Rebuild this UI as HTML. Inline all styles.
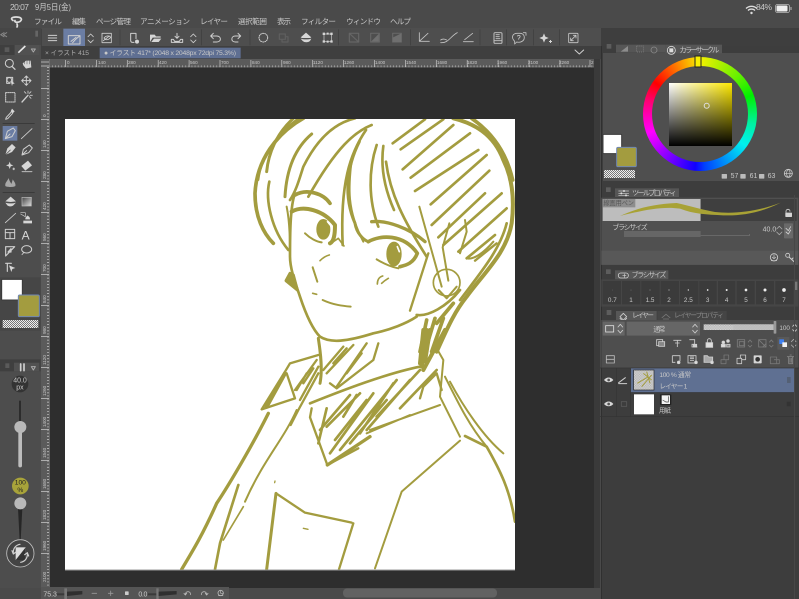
<!DOCTYPE html>
<html lang="ja"><head><meta charset="utf-8"><title>Clip Studio</title>
<style>
html,body{margin:0;padding:0;background:#4a4a4a;width:799px;height:599px;overflow:hidden}
#s{position:absolute;left:0;top:0;filter:blur(.35px)}
text{font-family:"Liberation Sans","Noto Sans CJK JP",sans-serif;fill:#c8c8c8}
.i{fill:none;stroke-linecap:round;stroke-linejoin:round}
.i:not([stroke]){stroke:#cfcfcf}
.i:not([stroke-width]){stroke-width:3.5}
.d{fill:none;stroke-linejoin:round}
.d:not([stroke]){stroke:#6c6c6c}
.d:not([stroke-width]){stroke-width:3.5}
.w{fill:#d6d6d6;stroke:none}
#wheel{position:absolute;left:643px;top:57px;width:114px;height:114px;border-radius:50%;background:conic-gradient(#f4f000,#66f000 45deg,#00f000 70deg,#00f0a0 100deg,#00f0f0 125deg,#0040ff 175deg,#1000ff 185deg,#a000ff 225deg,#ff00ff 250deg,#ff0070 285deg,#ff0000 305deg,#ff8000 335deg,#f4f000)}
#hole{position:absolute;left:9px;top:9px;width:96px;height:96px;border-radius:50%;background:#4f4f4f}
#sq{position:absolute;left:669px;top:83px;width:63px;height:63px;background:linear-gradient(to top,#000,rgba(0,0,0,0)),linear-gradient(to right,#fff,#fde800)}
</style></head><body>
<svg id="s" width="799" height="599" viewBox="0 0 799 599" xmlns="http://www.w3.org/2000/svg">
<defs>
<pattern id="ck" width="6" height="6" patternUnits="userSpaceOnUse"><rect width="6" height="6" fill="#eee"/><rect width="3" height="3" fill="#777"/><rect x="3" y="3" width="3" height="3" fill="#777"/></pattern>
<pattern id="ck2" width="5" height="5" patternUnits="userSpaceOnUse"><rect width="5" height="5" fill="#ddd"/><rect width="2.5" height="2.5" fill="#aaa"/><rect x="2.5" y="2.5" width="2.5" height="2.5" fill="#aaa"/></pattern>
<clipPath id="cv"><rect x="65" y="119" width="450" height="451"/></clipPath>
<linearGradient id="gr" x1="0" x2="1" y1="0" y2="1"><stop offset="0" stop-color="#444"/><stop offset="1" stop-color="#ddd"/></linearGradient>
</defs>
<rect width="799" height="599" fill="#4a4a4a"/>
<!-- workspace -->
<rect x="49" y="59" width="551" height="529" fill="#2e2e2e"/>
<rect x="594" y="59" width="6" height="529" fill="#3a3a3a"/>
<rect x="0" y="28" width="41" height="560" fill="#4d4d4d"/>
<rect x="41" y="46" width="560" height="13" fill="#3f3f3f"/>
<rect x="41" y="28" width="560" height="18" fill="#4e4e4e"/>
<rect x="41" y="59" width="553" height="8" fill="#5b5b5b"/>
<rect x="41" y="59" width="8" height="529" fill="#5b5b5b"/>
<rect x="0" y="28" width="41" height="17" fill="#464646"/>
<!-- canvas -->
<rect x="65" y="119" width="450" height="451" fill="#fff"/>
<g clip-path="url(#cv)">
<g transform="translate(240,110) scale(.33333)" fill="none" stroke="#a39c3f" stroke-width="9" stroke-linecap="round" stroke-linejoin="round">
<path d="M190 25C110 70 50 150 45 250C45 320 70 370 100 400" stroke-width="11"/>
<path d="M175 25C120 65 65 130 55 210" stroke-width="6"/>
<path d="M160 25C110 70 85 130 80 185"/>
<path d="M215 72C170 110 140 170 135 260"/>
<path d="M88 215C75 270 95 360 145 420" stroke-width="8"/>
<path d="M140 290C150 340 150 400 150 440" stroke-width="6"/>
<path d="M165 250C150 290 150 380 150 440C150 480 170 530 180 560C200 620 220 660 240 680C270 700 320 695 400 670C450 660 500 640 530 620" stroke-width="8"/>
<path d="M150 490L138 512L172 540L160 495Z" fill="#a39c3f"/>
<path d="M345 25C280 40 230 90 190 170C180 200 170 240 150 270" stroke-width="8"/>
<path d="M395 45C345 65 290 110 205 260" stroke-width="8"/>
<path d="M378 60C330 130 300 220 308 405" stroke-width="8"/>
<path d="M358 95C320 170 310 260 345 340C350 370 370 390 385 395" stroke-width="9"/>
<path d="M335 150C325 230 320 300 370 395" stroke-width="6"/>
<path d="M410 105C385 180 385 270 415 350" stroke-width="8"/>
<path d="M430 108C420 180 440 250 462 300" stroke-width="8"/>
<path d="M438 155C450 250 490 330 560 440" stroke-width="8"/>
<path d="M165 255C200 235 250 250 270 280" stroke-width="11"/>
<path d="M155 305C190 285 250 300 285 345C285 380 280 395 270 400" stroke-width="12"/>
<ellipse cx="250" cy="358" rx="18" ry="28" fill="#a39c3f" stroke-width="6"/>
<path d="M262 335L270 345" stroke="#fff" stroke-width="4"/>
<path d="M195 370C210 385 230 395 245 397" stroke-width="6"/>
<path d="M280 395L295 385L312 408" stroke-width="5"/>
<path d="M395 335C440 330 510 355 555 395" stroke-width="10"/>
<path d="M385 395C420 375 490 370 532 430C520 460 500 465 480 470" stroke-width="11"/>
<ellipse cx="462" cy="432" rx="20" ry="34" fill="#a39c3f" stroke-width="6"/>
<path d="M472 410L478 425" stroke="#fff" stroke-width="5"/>
<path d="M410 448C430 460 450 470 475 475" stroke-width="6"/>
<path d="M240 452C250 442 260 437 268 435" stroke-width="5"/>
<path d="M218 472L232 515" stroke-width="6"/>
<path d="M248 570C280 585 310 588 332 590" stroke-width="6"/>
<path d="M218 550L230 553" stroke-width="5"/>
<path d="M412 522C412 507 420 500 428 498M425 520C430 515 440 508 445 505" stroke-width="5"/>
<path d="M538 290L605 530" stroke-width="6"/>
<circle cx="620" cy="518" r="40" stroke-width="5"/>
<path d="M628 340L608 412L625 512" stroke-width="6"/>
<path d="M675 330L680 365L660 430" stroke-width="6"/>
<path d="M565 430L510 602" stroke-width="7"/>
<path d="M530 615C565 620 620 590 660 540" stroke-width="8"/>
<path d="M596 540L620 565L650 530" stroke-width="6"/>
<path d="M458 100L555 28" stroke-width="8"/>
<path d="M482 118L610 28" stroke-width="8"/>
<path d="M488 178L640 45" stroke-width="8"/>
<path d="M512 203L690 70" stroke-width="8"/>
<path d="M525 243L715 120" stroke-width="8"/>
<path d="M572 283L740 135" stroke-width="8"/>
<path d="M575 345L748 182" stroke-width="8"/>
<path d="M595 382L735 250" stroke-width="8"/>
<path d="M610 405L785 250" stroke-width="8"/>
<path d="M655 425L800 295" stroke-width="8"/>
<path d="M680 445L765 375" stroke-width="8"/>
<path d="M705 452L770 400" stroke-width="7"/>
<path d="M640 25C700 40 760 70 790 150C815 200 825 260 815 340C800 430 730 490 680 560C640 610 620 660 590 725" stroke-width="12"/>
<path d="M695 25C760 70 800 130 818 210" stroke-width="11"/>
<path d="M800 340C780 420 720 490 660 570" stroke-width="8"/>
<path d="M680 445C700 450 730 430 760 395" stroke-width="6"/>
<path d="M560 630L540 725M585 625L555 725M610 625L575 725M640 580L590 640" stroke-width="11"/>
</g>
<g transform="translate(170,330) scale(.33333)" fill="none" stroke="#a39c3f" stroke-width="8" stroke-linecap="round" stroke-linejoin="round">
<path d="M445 25C452 70 458 120 450 160" stroke-width="9"/>
<path d="M460 120L520 50M470 130L550 45M500 170L590 40M480 160L500 175L610 90L625 40M490 100L530 55M530 130L575 70" stroke-width="7"/>
<path d="M760 0L750 100M780 0L765 95M825 0L760 120M770 0L755 110" stroke-width="12"/>
<path d="M445 75L360 100L345 125L275 238L345 215L375 205L350 130" stroke-width="7"/>
<path d="M345 130L290 230" stroke-width="12"/>
<path d="M375 180L440 90M390 210L445 110M410 130L380 180M445 130L385 240L362 285M400 160L430 115" stroke-width="7"/>
<path d="M420 220C520 180 650 130 750 110" stroke-width="8"/>
<path d="M425 235L420 262L472 405L565 355" stroke-width="7"/>
<path d="M472 405L600 320" stroke-width="10"/>
<path d="M590 310L720 255M600 300L810 225" stroke-width="6"/>
<path d="M445 340L470 235M480 370L610 190M450 300L540 195M470 290L570 190M510 360L640 200M570 310L670 160M620 260L750 120M690 235L800 120M640 200L680 150M520 260L560 195M590 300L720 150M495 330L590 210M540 340L650 210" stroke-width="8"/>
<path d="M750 205L760 170L800 130L815 180" stroke-width="7"/>
<path d="M800 55L820 90L810 200L870 320" stroke-width="6"/>
<path d="M840 155C880 230 940 320 1000 370M825 140C870 230 900 290 950 350" stroke-width="6"/>
<path d="M885 318L950 350C990 420 1020 480 1035 575" stroke-width="8"/>
<path d="M870 332L695 485L615 715" stroke-width="6"/>
<path d="M295 250C250 340 180 460 140 520C100 610 70 660 35 718" stroke-width="10"/>
<path d="M380 240C340 330 280 390 225 515" stroke-width="6"/>
<path d="M205 465L150 640L135 718" stroke-width="8"/>
<path d="M220 530L160 630" stroke-width="5"/>
<path d="M318 490L290 718" stroke-width="9"/>
<path d="M318 490L405 548L545 578" stroke-width="7"/>
<path d="M550 580L507 718" stroke-width="7"/>
<path d="M400 595L414 598M315 453L314 458" stroke-width="4"/>
</g>
</g>
<rect x="65" y="569.5" width="450" height="1" fill="#999"/>

<!-- rulers -->
<g stroke="#c8c8c8" stroke-width=".7" fill="none">
<path d="M49 66.5H594" stroke-dasharray=".7 2.4" stroke-width="2"/>
<path d="M49 67H594" stroke="#7a7a7a"/>
<path d="M49.5 59V587" stroke="#7a7a7a"/>
<path d="M48 67V587" stroke-dasharray=".7 2.4" stroke-width="2"/>
<path d="M65.5 60V67M96.4 60V67M127.3 60V67M158.2 60V67M189.1 60V67M220 60V67M250.9 60V67M281.8 60V67M312.7 60V67M343.6 60V67M374.5 60V67M405.4 60V67M436.3 60V67M467.2 60V67M498.1 60V67M529 60V67M559.9 60V67M590 60V67"/>
<path d="M41 88.5H49M41 119.5H49M41 150.5H49M41 181.5H49M41 212.5H49M41 243.5H49M41 274.5H49M41 305.5H49M41 336.5H49M41 367.5H49M41 398.5H49M41 429.5H49M41 460.5H49M41 491.5H49M41 522.5H49M41 553.5H49" />
<path d="M41 62H49M41 66H49"/>
</g>
<g font-size="4.6">
<text x="67" y="64">0</text><text x="98" y="64">140</text><text x="128" y="64">280</text><text x="159" y="64">420</text><text x="190" y="64">560</text><text x="221" y="64">700</text><text x="252" y="64">840</text><text x="283" y="64">980</text><text x="313" y="64">1120</text><text x="344" y="64">1260</text><text x="375" y="64">1400</text><text x="406" y="64">1540</text><text x="437" y="64">1680</text><text x="467" y="64">1820</text><text x="497" y="64">1960</text><text x="528" y="64">2100</text><text x="559" y="64">2260</text><text x="591" y="64">2</text>
<text transform="translate(46,117) rotate(-90)">0</text><text transform="translate(46,148) rotate(-90)">140</text><text transform="translate(46,179) rotate(-90)">280</text><text transform="translate(46,210) rotate(-90)">420</text><text transform="translate(46,241) rotate(-90)">560</text><text transform="translate(46,272) rotate(-90)">700</text><text transform="translate(46,303) rotate(-90)">840</text><text transform="translate(46,334) rotate(-90)">980</text><text transform="translate(46,365) rotate(-90)">1120</text><text transform="translate(46,396) rotate(-90)">1260</text><text transform="translate(46,427) rotate(-90)">1400</text><text transform="translate(46,458) rotate(-90)">1540</text><text transform="translate(46,489) rotate(-90)">1680</text><text transform="translate(46,520) rotate(-90)">1820</text><text transform="translate(46,551) rotate(-90)">1960</text><text transform="translate(46,582) rotate(-90)">2100</text>
</g>

<!-- status & menu -->
<g font-size="8.5"><text x="10" y="10" font-size="8.5" textLength="19">20:07</text><text x="35" y="10" textLength="36" lengthAdjust="spacingAndGlyphs">9月5日(金)</text>
<text x="756" y="10" textLength="16">84%</text></g>
<g font-size="7.6">
<text x="34" y="24" textLength="28">ファイル</text><text x="72" y="24" textLength="14">編集</text><text x="96" y="24" textLength="35">ページ管理</text><text x="140" y="24" textLength="50">アニメーション</text><text x="200" y="24" textLength="28">レイヤー</text><text x="238" y="24" textLength="29">選択範囲</text><text x="277" y="24" textLength="14">表示</text><text x="301" y="24" textLength="35">フィルター</text><text x="346" y="24" textLength="35">ウィンドウ</text><text x="390" y="24" textLength="21">ヘルプ</text>
</g>
<!-- wifi & battery -->
<path d="M746 8.5a8 8 0 0 1 11 0M748 10.5a5 5 0 0 1 7 0" stroke="#ddd" stroke-width="1.3" fill="none"/><circle cx="751.5" cy="13" r="1.2" fill="#ddd"/>
<rect x="775.5" y="4.5" width="14" height="8" rx="2" fill="none" stroke="#bbb" stroke-width=".8"/><rect x="776.5" y="5.5" width="11" height="6" rx="1" fill="#eee"/><rect x="790.5" y="7" width="1" height="3" fill="#bbb"/>
<!-- logo -->
<path d="M13 20.5C10 18.500 12 17 16 17C21 17 23 19 20 21.500C17 23 14 22 15 20.500M17 24C17.500 25 17.500 26 17 27" stroke="#ddd" stroke-width="1.700" fill="none" stroke-linecap="round"/>

<!-- toolbar (zoom coords) -->
<g transform="scale(.33333)">
<rect x="190" y="86" width="65" height="52" fill="#6b7da3"/>
<path d="M125 86V138M360 88V136M605 88V136M750 88V136M1015 88V136M1232 88V136M1440 88V136M1520 88V136M1600 88V136M1678 88V136" stroke="#3d3d3d" stroke-width="2" fill="none"/>
<path class="i" d="M145 106H170M145 114H170M145 122H170" stroke-width="3"/>
<path class="i" d="M205 107H240V132H205ZM240 107L226 119L218 128M213 124L228 112" stroke-width="3"/>
<path class="i" d="M264 110L272 102L280 110M264 120L272 128L280 120" stroke-width="2.500"/>
<path class="i" d="M306 100H334V128H306ZM312 114C318 106 328 106 332 112C326 120 316 122 312 114ZM310 122L328 108" stroke-width="2.500"/>
<path class="i" d="M392 100H408V116M392 100V122A5 5 0 0 0 397 127H402" stroke-width="3"/><circle cx="411" cy="125" r="6" class="w"/>
<path class="w" d="M450 104H464L468 109H482V113H458L450 126Z"/><path class="w" d="M454 126L462 116H484L476 126Z"/>
<path class="i" d="M514 118H520L524 124H538L542 118H548V127H514ZM531 100V115M525 109L531 115L537 109" stroke-width="3"/>
<path class="i" d="M572 110L580 102L588 110M572 120L580 128L588 120" stroke-width="2.500"/>
<path class="i" d="M632 108H650C665 108 665 126 650 126H640M640 100L632 108L640 116" stroke-width="3"/>
<path class="i" d="M722 108H706C692 108 692 126 706 126H714M714 100L722 108L714 116" stroke-width="3"/>
<circle cx="790" cy="113" r="13" class="i" stroke-dasharray="3 3.500" stroke-width="3"/>
<path class="d" d="M838 102H856V118H838ZM846 118V126H864V110H856" stroke="#5f5f5f"/>
<path class="w" d="M918 98L934 112L930 114H906L902 112Z"/><path class="w" d="M902 116C910 119 926 119 934 116L930 123C924 128 914 128 908 123Z"/>
<path class="i" d="M972 102H994V124H972Z" stroke-width="2"/><path class="w" d="M968 98h7v7h-7zM991 98h7v7h-7zM968 121h7v7h-7zM991 121h7v7h-7zM980 98h6v6h-6zM980 122h6v6h-6z"/>
<path class="d" d="M1048 100H1076V126H1048ZM1048 100L1076 126" stroke="#666"/>
<path d="M1112 126L1138 100V126Z" fill="#6f6f6f"/><path class="d" d="M1112 100H1138V126H1112Z" stroke="#666"/>
<path class="d" d="M1178 100H1204V126H1178Z" stroke="#666"/><path d="M1178 113L1204 100V126H1178Z" fill="#6f6f6f"/>
<g class="i" stroke="#c4c4c4" stroke-width="2.500"><path d="M1258 98V124H1288M1260 122L1284 100"/><path d="M1322 128C1345 130 1350 110 1372 98M1322 120C1330 114 1336 118 1340 120"/><path d="M1390 125H1420M1394 119L1418 100"/></g>
<g class="i" stroke="#c8c8c8" stroke-width="2.800"><rect x="1482" y="98" width="24" height="32" rx="3"/><path d="M1488 104H1498M1488 110H1498M1488 116H1500M1484 122H1504"/></g>
<g class="i" stroke="#c4c4c4" stroke-width="2.500"><path d="M1544 124C1532 112 1538 100 1552 100H1560C1570 100 1575 108 1572 118C1568 126 1558 128 1550 126L1544 132Z"/><path d="M1552 108C1558 104 1564 108 1558 113C1556 115 1556 117 1556 118"/><path d="M1570 98H1578V106"/></g>
<g class="w"><path d="M1632 100L1636 110L1646 114L1636 118L1632 128L1628 118L1618 114L1628 110Z"/><path d="M1650 120h3v3h3v3h-3v3h-3v-3h-3v-3h3z"/></g>
<g class="i" stroke="#c8c8c8" stroke-width="2.500"><rect x="1706" y="100" width="28" height="28" rx="2"/><path d="M1712 122L1728 106M1720 106H1728V114M1712 114V122H1720"/></g>
<path class="i" d="M1725 150L1738 162L1751 150" stroke-width="3"/>
<rect x="1806" y="86" width="591" height="52" fill="#3e3e3e"/>
<path d="M1815 93V110" stroke="#666" stroke-width="8"/>
<path class="i" d="M2330 97L2338 104L2330 111M2378 97L2385 104L2378 111M2388 97L2395 104L2388 111" stroke="#777" stroke-width="3"/>
<path class="i" d="M20 98L10 104L20 110M12 98L2 104L12 110" stroke="#888" stroke-width="3"/>
<path d="M110 92V110" stroke="#666" stroke-width="8"/>
<!-- tabs -->
<text x="135" y="165" font-size="20" style="fill:#aaa" textLength="132">× イラスト 415</text>
<rect x="299" y="143" width="423" height="32" fill="#5f6f92"/>
<text x="312" y="165" font-size="20.500" textLength="396">● イラスト 417* (2048 x 2048px 72dpi 75.3%)</text>
</g>

<!-- left tools -->
<g transform="translate(0,40) scale(.33333)">
<rect x="0" y="15" width="44" height="30" fill="#3f3f3f"/><rect x="44" y="15" width="74" height="30" fill="#515151"/>
<rect x="14" y="22" width="14" height="14" fill="#5a5a5a"/>
<path d="M55 38L76 18" stroke="#e8e8e8" stroke-width="5"/><path class="i" d="M94 27H106L100 36Z" stroke="#aaa" stroke-width="3"/>
<circle cx="28" cy="70" r="12" class="i" stroke-width="3"/><path class="i" d="M37 80L45 88" stroke-width="4"/>
<path class="w" d="M68 70L78 62L92 62L94 82L78 86L70 76Z"/><path class="i" d="M74 62V72M81 60V72M88 60V72" stroke="#4d4d4d" stroke-width="1.500"/>
<path class="i" d="M20 112H38V128M20 112V130H30" stroke-width="3"/><circle cx="28" cy="120" r="7" class="i" stroke-width="3"/><path class="w" d="M32 122L44 130L38 132L36 138Z"/>
<path class="i" d="M79 108V136M65 122H93M74 113L79 108L84 113M74 131L79 136L84 131M70 117L65 122L70 127M88 117L93 122L88 127" stroke-width="3"/>
<rect x="17" y="158" width="28" height="28" class="i" stroke-width="3" stroke-dasharray="3 3"/>
<path class="i" d="M66 186L84 166" stroke-width="4"/><path class="i" d="M84 160V153M90 166H97M88 160L93 155M78 160L73 155M88 170L93 175" stroke-width="2.500"/>
<path class="w" d="M36 206L44 214L38 220L32 214Z"/><path class="i" d="M34 216L19 232L17 238L23 236L38 220" stroke-width="3"/>
<rect x="8" y="258" width="44" height="44" fill="#6b7da3"/>
<path class="i" d="M16 296L22 274L40 264L46 272L36 290ZM16 296L30 282" stroke-width="3"/>
<path class="i" d="M64 296L96 266" stroke-width="2.500"/>
<path class="w" d="M16 345L22 325L36 312L47 322L36 336Z"/><path class="i" d="M16 345L31 330" stroke="#444" stroke-width="2"/>
<path class="i" d="M66 345L70 328L88 315L97 324L86 338ZM66 345L80 332" stroke-width="3"/>
<path class="w" d="M29 365L32 373L40 376L32 379L29 387L26 379L18 376L26 373Z"/><path class="w" d="M40 383h2.500v2.500H45v2.500h-2.500v2.500H40v-2.500h-2.500V385.500H40z"/>
<path class="w" d="M64 378L84 362L96 376L76 392Z"/><path class="i" d="M66 395H96" stroke-width="2.500"/>
<path d="M16 438C14 428 22 424 26 414C28 424 33 428 34 432C36 426 38 420 38 418C44 426 48 432 46 438C42 442 20 442 16 438Z" fill="#a8a8a8"/>
<path d="M8 251H104M8 458H104" stroke="#2f2f2f" stroke-width="2"/>
<path class="w" d="M32 470L48 484L32 486L16 484Z"/><path class="w" d="M16 488C24 491 40 491 48 488L40 496C34 500 28 500 22 496Z"/>
<rect x="66" y="472" width="28" height="26" fill="url(#gr)" stroke="#bbb" stroke-width="2"/>
<path class="i" d="M16 548L47 520" stroke-width="2.500"/>
<path class="w" d="M70 542H96V550H70ZM76 538C76 530 80 530 83 526C86 530 90 530 90 538Z"/><path class="i" d="M62 518H76V530L62 522" stroke-width="2"/>
<rect x="16" y="568" width="28" height="28" class="i" stroke-width="3"/><path class="i" d="M16 578H44M30 578V596" stroke-width="3"/>
<text x="65" y="598" font-size="36" style="fill:#d8d8d8">A</text>
<path class="i" d="M17 648V620H44ZM24 636L33 626V636Z" stroke-width="3.500"/>
<ellipse cx="80" cy="628" rx="15" ry="11" class="i" stroke-width="3"/><path class="i" d="M72 637L66 644" stroke-width="2.500"/>
<path class="i" d="M17 670H34M22 670V694" stroke-width="3.500"/><path class="w" d="M27 676L46 684L37 687L34 696Z"/>
<rect x="0" y="712" width="122" height="160" fill="#464646"/>
<rect x="5" y="718" width="62" height="62" rx="2" fill="#fff" stroke="#3a3a3a" stroke-width="3"/>
<rect x="55" y="765" width="63" height="65" rx="4" fill="#a39c3f" stroke="#7087b4" stroke-width="3"/>
<rect x="8" y="840" width="107" height="24" fill="url(#ck)"/>
</g>

<!-- left sub panel -->
<g transform="translate(0,340) scale(.33333)">
<rect x="0" y="58" width="122" height="36" fill="#3f3f3f"/><rect x="42" y="68" width="76" height="26" fill="#515151"/>
<rect x="16" y="70" width="12" height="14" fill="#5a5a5a"/>
<path class="i" d="M62 72V92M72 72V92" stroke-width="5"/><path class="i" d="M94 80H106L100 90Z" stroke="#aaa" stroke-width="3"/>
<circle cx="60" cy="132" r="25" fill="#333"/>
<text x="60" y="128" text-anchor="middle" font-size="21">40.0</text><text x="60" y="149" text-anchor="middle" font-size="21">px</text>
<rect x="57" y="182" width="6" height="80" fill="#2c2c2c"/>
<rect x="55" y="262" width="11" height="120" rx="5" fill="#bdbdbd"/>
<circle cx="61" cy="261" r="18" fill="#b9b9b9"/>
<circle cx="61" cy="438" r="25" fill="#a8a33a"/>
<text x="61" y="433" text-anchor="middle" font-size="20" style="fill:#222">100</text><text x="61" y="456" text-anchor="middle" font-size="20" style="fill:#222">%</text>
<path d="M54 505H67L62 602H59Z" fill="#262626"/>
<circle cx="61" cy="490" r="18" fill="#b9b9b9"/>
<circle cx="61" cy="640" r="41" fill="#444" stroke="#c0c0c0" stroke-width="2.500"/>
<rect x="47" y="622" width="30" height="38" fill="#ddd"/><path d="M47 660L77 622V660Z" fill="#333"/>
<path class="i" d="M40 642C38 625 48 615 60 613M82 638C84 655 74 665 62 667M36 632L40 642L48 636M86 648L82 638L74 644" stroke-width="3.500"/>
</g>
<rect x="41" y="587" width="188" height="12" fill="#555"/>
<g transform="translate(0,560) scale(.33333)">
<text x="130" y="110" font-size="21">75.3</text>
<path d="M170 100H195V106H170Z" fill="#3a3a3a"/><rect x="193" y="85" width="8" height="33" fill="#777"/>
<path d="M201 108L247 103V93L201 95Z" fill="#2f2f2f"/>
<path class="i" d="M276 100H290M325 100H339M332 93V107" stroke="#999" stroke-width="2.500"/>
<rect x="375" y="94" width="11" height="11" rx="2" fill="#ccc"/>
<text x="415" y="110" font-size="21" textLength="27">0.0</text>
<path d="M443 100H470V106H443Z" fill="#3a3a3a"/><rect x="469" y="85" width="7" height="33" fill="#777"/>
<path d="M476 108L530 103V93L476 95Z" fill="#2f2f2f"/>
<path class="i" d="M556 104C556 92 572 92 572 104M552 100L556 105L560 100" stroke="#bbb" stroke-width="2.500"/>
<path class="i" d="M604 104C604 92 620 92 620 104M616 100L620 105L624 100" stroke="#bbb" stroke-width="2.500"/>
<circle cx="662" cy="99" r="8" class="i" stroke="#bbb" stroke-width="2.500"/><path class="i" d="M662 93V100H668M655 107H669" stroke="#bbb" stroke-width="2"/>
</g>
<rect x="343" y="588.500" width="154" height="9" rx="4" fill="#626262"/>

<!-- right panels -->
<rect x="601" y="46" width="198" height="553" fill="#3d3d3d"/>
<rect x="601" y="28" width="198" height="18" fill="#3e3e3e"/>
<path d="M601.500 46V599" stroke="#303030"/>
<rect x="603" y="53" width="196" height="128" fill="#4f4f4f"/>
<g transform="translate(600,40) scale(.33333)">
<rect x="20" y="12" width="14" height="14" fill="#5d5d5d"/>
<rect x="48" y="14" width="148" height="24" fill="#565656"/><rect x="196" y="14" width="170" height="26" fill="#565656"/>
<path d="M62 35L84 18V35Z" fill="#8c8c8c"/><rect x="110" y="18" width="20" height="18" fill="none" stroke="#888" stroke-width="2" stroke-dasharray="3 3"/>
<circle cx="162" cy="30" r="9" class="i" stroke="#888" stroke-width="2.500"/>
<circle cx="214" cy="31" r="12" class="i" stroke="#ddd" stroke-width="2.500"/><rect x="208" y="25" width="12" height="12" fill="#ddd"/>
<text x="238" y="37" font-size="22" textLength="120">カラーサークル</text>
<rect x="9" y="283" width="56" height="58" rx="2" fill="#fff" stroke="#3a3a3a" stroke-width="3"/>
<rect x="50" y="322" width="59" height="58" rx="4" fill="#a39c3f" stroke="#7087b4" stroke-width="3"/>
<rect x="12" y="390" width="93" height="24" fill="url(#ck)"/>
<rect x="365" y="402" width="16" height="14" rx="2" fill="#bbb"/><rect x="421" y="402" width="16" height="14" rx="2" fill="#bbb"/><rect x="477" y="402" width="16" height="14" rx="2" fill="#bbb"/>
<text x="392" y="414" font-size="21">57</text><text x="449" y="414" font-size="21">61</text><text x="503" y="414" font-size="21">63</text>
<circle cx="565" cy="400" r="12" fill="#555" stroke="#ccc" stroke-width="2.500"/><path class="i" d="M553 400H577M565 388C558 394 558 406 565 412M565 388C572 394 572 406 565 412" stroke="#ccc" stroke-width="2"/>
</g>
<!-- tool property -->
<g transform="translate(600,180) scale(.33333)">
<rect x="18" y="22" width="14" height="14" fill="#5d5d5d"/>
<rect x="45" y="25" width="192" height="26" fill="#565656"/>
<path class="i" d="M56 33H86M56 40H86M56 46H86" stroke-width="2"/><circle cx="72" cy="33" r="3" fill="#ddd"/><circle cx="64" cy="40" r="3" fill="#ddd"/><circle cx="78" cy="46" r="3" fill="#ddd"/>
<text x="96" y="46" font-size="21.500" textLength="134">ツールプロパティ</text>
<rect x="4" y="53" width="591" height="202" fill="#505050"/>
<rect x="8" y="57" width="294" height="66" fill="#bdbdbd"/><rect x="302" y="57" width="288" height="66" fill="#3f3f3f"/>
<rect x="8" y="57" width="98" height="25" fill="#8d8d8d"/>
<text x="10" y="75" font-size="19" style="fill:#555" textLength="92">線画用ペン</text>
<path d="M60 108C110 85 160 72 230 69C270 78 310 90 345 96C400 102 470 96 542 68C480 100 420 108 370 106C320 104 280 102 240 86C190 78 130 90 60 108Z" fill="#a8a235"/>
<path class="i" d="M558 100V94A6 6 0 0 1 570 94" stroke-width="2.500"/><rect x="556" y="98" width="20" height="13" rx="2" fill="#d5d5d5"/>
<text x="37" y="148" font-size="21" textLength="106">ブラシサイズ</text>
<rect x="72" y="153" width="230" height="18" fill="#666"/><path d="M302 167H448M448 162V168" stroke="#777" stroke-width="2"/>
<text x="488" y="155" font-size="21">40.0</text>
<path class="i" d="M530 147L538 139L546 147M530 156L538 164L546 156" stroke="#aaa" stroke-width="2.500"/>
<rect x="552" y="130" width="27" height="45" rx="2" fill="#696969"/>
<path class="i" d="M558 145L565 152L572 140M558 156L565 162L572 150" stroke-width="2.500"/>
<rect x="4" y="212" width="591" height="42" fill="#585858"/>
<circle cx="522" cy="232" r="11" class="i" stroke-width="2.500"/><path class="i" d="M522 225V235M517 232L522 236L527 232M514 242H530" stroke-width="2"/>
<circle cx="563" cy="226" r="6" class="i" stroke-width="2.500"/><path class="i" d="M567 231L582 245M575 238L579 234" stroke-width="3"/>
<rect x="18" y="268" width="14" height="14" fill="#5d5d5d"/>
<rect x="45" y="271" width="160" height="27" fill="#565656"/>
<rect x="55" y="279" width="30" height="15" rx="7" class="i" stroke-width="2.500"/><path class="i" d="M68 287H78M73 282V292" stroke-width="2"/>
<text x="95" y="291" font-size="21" textLength="104">ブラシサイズ</text>
<rect x="4" y="298" width="591" height="82" fill="#464646"/>
<g fill="#3b3b3b"><rect x="8" y="303" width="55" height="70"/><rect x="66" y="303" width="55" height="70"/><rect x="124" y="303" width="55" height="70"/><rect x="182" y="303" width="55" height="70"/><rect x="240" y="303" width="55" height="70"/><rect x="298" y="303" width="52" height="70"/><rect x="354" y="303" width="52" height="70"/><rect x="410" y="303" width="54" height="70"/><rect x="468" y="303" width="54" height="70"/><rect x="526" y="303" width="55" height="70"/></g>
<rect x="584" y="305" width="8" height="25" fill="#777"/>
<g font-size="19" text-anchor="middle"><text x="37" y="366">0.7</text><text x="93" y="366">1</text><text x="150" y="366">1.5</text><text x="207" y="366">2</text><text x="265" y="366">2.5</text><text x="323" y="366">3</text><text x="380" y="366">4</text><text x="438" y="366">5</text><text x="495" y="366">6</text><text x="552" y="366">7</text></g>
<g fill="#eee"><circle cx="37" cy="330" r=".6"/><circle cx="93" cy="330" r=".8"/><circle cx="150" cy="330" r="1"/><circle cx="207" cy="330" r="1.500"/><circle cx="265" cy="330" r="2"/><circle cx="323" cy="330" r="2.500"/><circle cx="380" cy="330" r="3"/><circle cx="438" cy="330" r="4"/><circle cx="495" cy="330" r="4.500"/><circle cx="552" cy="330" r="5.500"/></g>
</g>
<!-- layers -->
<g transform="translate(600,305) scale(.33333)">
<rect x="20" y="15" width="14" height="15" fill="#5d5d5d"/>
<rect x="48" y="18" width="122" height="28" fill="#575757"/><rect x="172" y="18" width="208" height="27" fill="#454545"/>
<path class="i" d="M60 35L70 25L80 35L70 45ZM60 40L70 50L80 40" stroke-width="2.500"/>
<text x="96" y="38" font-size="20.500" textLength="66">レイヤー</text>
<path class="i" d="M186 38L198 28L210 38M190 42H206" stroke="#777" stroke-width="2.500"/>
<text x="222" y="38" font-size="20" style="fill:#8a8a8a" textLength="150">レイヤープロパティ</text>
<rect x="4" y="45" width="591" height="144" fill="#4e4e4e"/>
<rect x="8" y="50" width="66" height="42" rx="2" fill="#666"/><rect x="17" y="62" width="24" height="19" fill="none" stroke="#ddd" stroke-width="2.500"/>
<path class="i" d="M54 66L61 58L68 66M54 76L61 84L68 76" stroke="#ccc" stroke-width="2.500"/>
<rect x="80" y="50" width="220" height="42" rx="2" fill="#666"/>
<text x="160" y="79" font-size="20" textLength="36">通常</text>
<path class="i" d="M278 66L285 58L292 66M278 76L285 84L292 76" stroke="#ccc" stroke-width="2.500"/>
<rect x="311" y="58" width="210" height="17" fill="url(#ck2)"/><rect x="400" y="58" width="121" height="17" fill="#bbb" opacity=".7"/>
<rect x="521" y="48" width="8" height="38" rx="2" fill="#999"/>
<text x="538" y="75" font-size="19">100</text>
<path class="i" d="M578 64L584 58L590 64M578 74L584 80L590 74" stroke="#ccc" stroke-width="2.500"/>
<g stroke="#cfcfcf" fill="none" stroke-width="2.500">
<rect x="170" y="104" width="18" height="18"/><rect x="176" y="110" width="18" height="14" fill="#888"/>
<path d="M220 106H244M232 106V126M225 114H239"/>
<path d="M268 104H284V118H276V126H292"/><rect x="280" y="118" width="10" height="8" fill="#ccc"/>
<rect x="318" y="113" width="20" height="14" fill="#ddd"/><path d="M322 113V107A6 6 0 0 1 334 107V113"/>
<circle cx="370" cy="112" r="4" fill="#ddd"/><circle cx="384" cy="108" r="4" fill="#ddd"/><rect x="364" y="118" width="12" height="8" fill="#ddd"/><rect x="380" y="118" width="10" height="8" fill="#888"/>
</g>
<g stroke="#7b7b7b" fill="none" stroke-width="2.500">
<rect x="412" y="104" width="22" height="22"/><rect x="418" y="110" width="14" height="12"/><path d="M444 112L450 105L456 112M444 120L450 126L456 120"/>
<rect x="476" y="104" width="22" height="22"/><path d="M476 104L498 126M488 126L498 116"/><path d="M508 112L514 105L520 112M508 120L514 126L520 120"/>
</g>
<rect x="532" y="96" width="36" height="38" fill="#595959"/><rect x="538" y="103" width="14" height="14" fill="#3f80ef"/><rect x="547" y="112" width="14" height="14" fill="#f3f3f3"/>
<path class="i" d="M574 110L581 103L588 110M574 120L581 127L588 120" stroke="#aaa" stroke-width="2.500"/>
<path class="i" d="M19 152H43V174H19ZM19 163H43" stroke="#bbb" stroke-width="2.500"/>
<g stroke="#d0d0d0" fill="none" stroke-width="2.500">
<path d="M217 152H240V168M217 152V172H226"/><circle cx="236" cy="172" r="4" fill="#ddd"/>
<rect x="264" y="152" width="24" height="22"/><path d="M270 160H282M270 166H282M270 156H282"/><circle cx="288" cy="172" r="4" fill="#ddd"/>
<path d="M312 152H322L326 156H338V172H312Z" fill="#aaa"/><circle cx="336" cy="172" r="4" fill="#ddd"/>
</g>
<path class="d" d="M363 164H378V176H363ZM372 164V150H386V164H378" stroke="#777" stroke-width="2.500"/>
<path class="i" d="M411 160H425V176H411ZM421 160V150H437V164H425" stroke="#ccc" stroke-width="2.500"/>
<rect x="461" y="151" width="24" height="24" rx="2" fill="#d5d5d5"/><circle cx="473" cy="163" r="7" fill="#333"/>
<path class="d" d="M511 156H530V176H511ZM522 164H538V176H530" stroke="#777" stroke-width="2.500"/>
<path class="i" d="M562 155H582M566 155V176H578V155M570 150H574M570 160V172M574 160V172" stroke="#888" stroke-width="2.500"/>
<rect x="0" y="188" width="598" height="2" fill="#333"/>
<rect x="92" y="190" width="492" height="72" fill="#5f7092"/>
<rect x="92" y="262" width="492" height="2" fill="#333"/>
<path d="M50 190V335M92 190V335" stroke="#333" stroke-width="1.500"/>
<path class="w" d="M12 225C20 215 32 215 40 225C32 234 20 234 12 225Z"/><circle cx="26" cy="225" r="4" fill="#555"/>
<path class="w" d="M12 297C20 287 32 287 40 297C32 306 20 306 12 297Z"/><circle cx="26" cy="297" r="4" fill="#555"/>
<path class="i" d="M56 236H80M56 233L76 218" stroke-width="3"/>
<rect x="64" y="290" width="16" height="14" fill="none" stroke="#5a5a5a" stroke-width="2.500"/>
<rect x="100" y="194" width="63" height="62" fill="#2b2b2b"/>
<rect x="102" y="196" width="59" height="58" fill="url(#ck2)"/>
<path d="M130 205L155 225M112 235L145 215M125 245L155 210M140 200L150 235" stroke="#a39c3f" stroke-width="3" fill="none"/>
<text x="178" y="216" font-size="20" textLength="95">100 % 通常</text>
<text x="178" y="250" font-size="20" textLength="84">レイヤー 1</text>
<path d="M561 219H572M561 225H572M561 231H572" stroke="#444" stroke-width="2.500"/>
<rect x="102" y="268" width="60" height="60" fill="#fff"/>
<rect x="180" y="268" width="34" height="32" rx="2" fill="#222"/><rect x="185" y="271" width="25" height="26" fill="#f3f3f3"/><path d="M188 285L198 291L205 291V274" stroke="#444" stroke-width="2" fill="none"/>
<text x="177" y="322" font-size="19" textLength="36">用紙</text>
<rect x="560" y="290" width="12" height="14" fill="#333"/>
<rect x="0" y="334" width="598" height="2" fill="#333"/>
</g>
<path d="M794.500 195V599" stroke="#474747"/>
</svg>
<div id="wheel"><div id="hole"></div></div>
<div id="sq"></div>
<svg width="799" height="599" style="position:absolute;left:0;top:0" xmlns="http://www.w3.org/2000/svg">
<rect x="695" y="56" width="6" height="11" fill="#f8f000" stroke="#222" stroke-width="1"/>
<circle cx="706.700" cy="105.700" r="2.500" fill="none" stroke="#ddd" stroke-width="1"/>
</svg>
</body></html>
